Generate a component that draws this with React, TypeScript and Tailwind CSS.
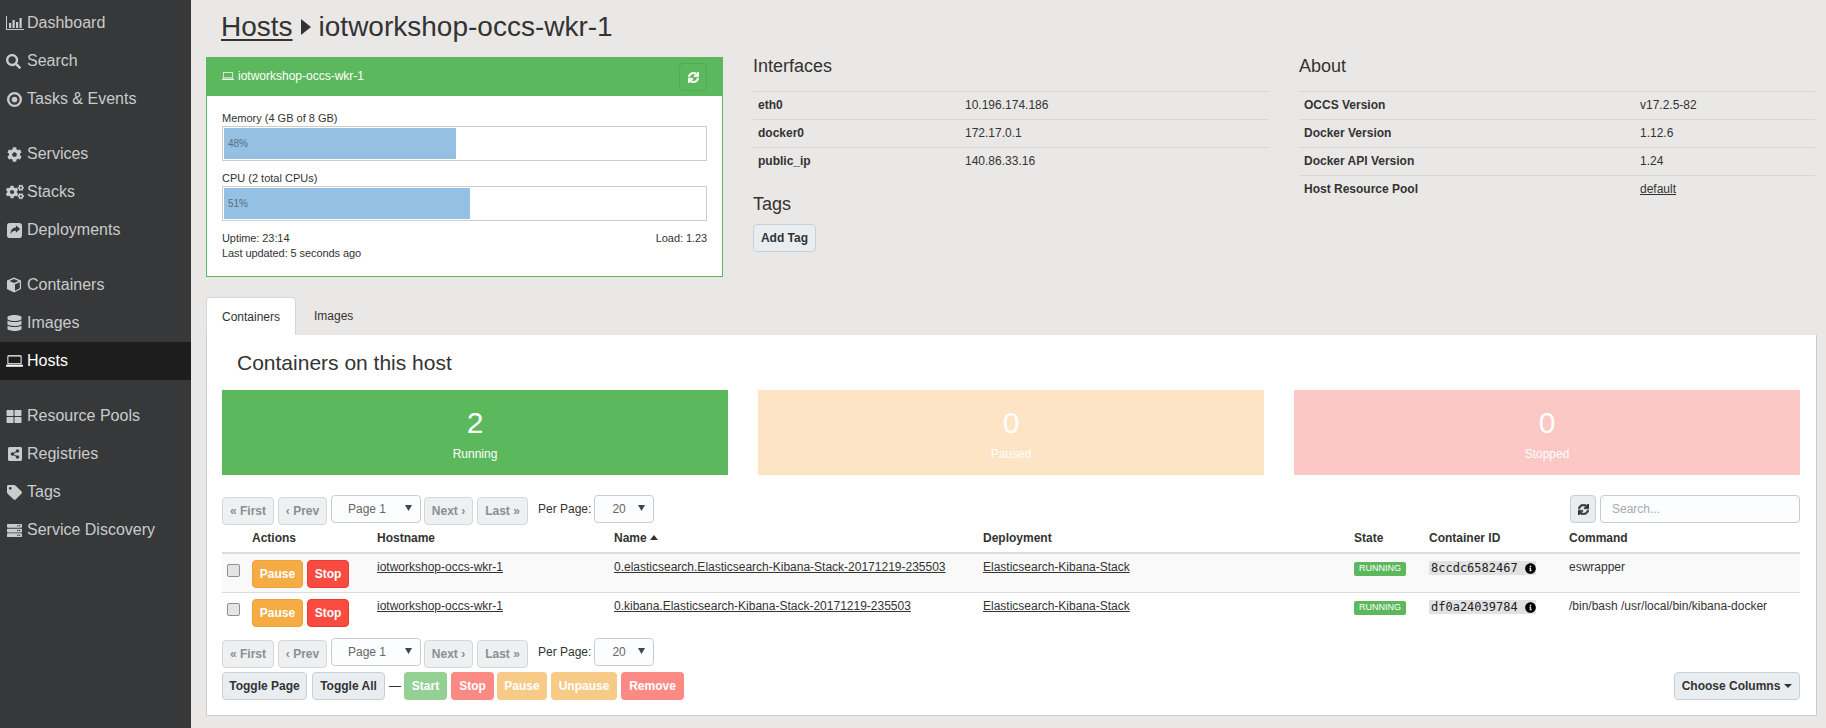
import React from 'react';
import {
  FaSearch, FaCog, FaCogs, FaDatabase,
  FaThLarge, FaShareAltSquare, FaTag, FaServer, FaSync, FaInfoCircle,
} from 'react-icons/fa';

const ChartIcon = () => (
  <svg viewBox="0 0 18 16" className="w-[18px] h-[16px]" fill="currentColor">
    <path d="M0 1h1v13h17v1H0z" />
    <path d="M3 8h2.200v5H3zM6.500 5h2.200v8H6.500zM10 7h2.200v6H10zM13.500 3h2.200v10h-2.200z" />
  </svg>
);

const DotCircleIcon = () => (
  <svg viewBox="0 0 16 16" className="w-[15px] h-[15px] ml-px" fill="currentColor">
    <path fillRule="evenodd" d="M8 0a8 8 0 1 1 0 16A8 8 0 0 1 8 0zm0 2.500a5.500 5.500 0 1 0 0 11 5.500 5.500 0 0 0 0-11z" />
    <circle cx="8" cy="8" r="3" />
  </svg>
);

const ShareSquareIcon = () => (
  <svg viewBox="0 0 16 16" className="w-[15px] h-[15px] ml-px" fill="currentColor">
    <rect width="16" height="16" rx="3" />
    <path fill="#37383a" d="M9.500 2.500L14 6.500l-4.500 4V8.200C6.500 8.200 5 9 4 12c-.5-4 1.500-7 5.500-7.200z" />
  </svg>
);

const CubeIcon = () => (
  <svg viewBox="0 0 16 16" className="w-[16px] h-[16px]" fill="currentColor">
    <path d="M8 .5l7 3v8.500l-7 3.500-7-3.500V3.500z" />
    <path fill="#37383a" d="M8 2l4.500 2L8 6 3.500 4zM9 7.200l4.800-2v6.100L9 13.800z" />
  </svg>
);

const LaptopIcon = ({ className = 'w-[17px] h-[14px]' }: { className?: string }) => (
  <svg viewBox="0 0 18 14" className={className} fill="currentColor">
    <path d="M2.500 1h13a1 1 0 0 1 1 1v8.500h-15V2a1 1 0 0 1 1-1zm0 1.200v7.100h13V2.200z" />
    <path d="M0 11h18v1a1 1 0 0 1-1 1H1a1 1 0 0 1-1-1z" />
  </svg>
);

const NavItem = ({ icon, label, active }: { icon: React.ReactNode; label: string; active?: boolean }) => (
  <div className={`h-[38px] flex items-center pl-[6px] text-[16px] ${active ? 'bg-[#1c1d1c] text-white' : 'text-[#c9cccc]'}`}>
    <span className="w-[21px] flex justify-start items-center shrink-0">{icon}</span>
    <span>{label}</span>
  </div>
);

const Sidebar = () => (
  <aside className="w-[191px] shrink-0 bg-[#37383a] pt-[4px]">
    <NavItem icon={<ChartIcon />} label="Dashboard" />
    <NavItem icon={<FaSearch className="w-[15px] h-[15px]" />} label="Search" />
    <NavItem icon={<DotCircleIcon />} label="Tasks & Events" />
    <div className="h-[17px]" />
    <NavItem icon={<FaCog className="w-[15px] h-[15px] ml-px" />} label="Services" />
    <NavItem icon={<FaCogs className="w-[18px] h-[16px]" />} label="Stacks" />
    <NavItem icon={<ShareSquareIcon />} label="Deployments" />
    <div className="h-[17px]" />
    <NavItem icon={<CubeIcon />} label="Containers" />
    <NavItem icon={<FaDatabase className="w-[15px] h-[16px] ml-px" />} label="Images" />
    <NavItem icon={<LaptopIcon />} label="Hosts" active />
    <div className="h-[17px]" />
    <NavItem icon={<FaThLarge className="w-[16px] h-[15px]" />} label="Resource Pools" />
    <NavItem icon={<FaShareAltSquare className="w-[16px] h-[16px] ml-px" />} label="Registries" />
    <NavItem icon={<FaTag className="w-[15px] h-[15px] ml-px" />} label="Tags" />
    <NavItem icon={<FaServer className="w-[17px] h-[15px]" />} label="Service Discovery" />
  </aside>
);

const Meter = ({ label, pct, width }: { label: string; pct: string; width: string }) => (
  <div>
    <div className="text-[11px] leading-[14px] text-[#333]">{label}</div>
    <div className="h-[35px] border border-[#ccc] p-px mt-[1px] bg-white">
      <div className={`h-full bg-[#93c0e3] text-[10px] leading-[31px] pl-[4px] text-[#5d6d7a] ${width}`}>{pct}</div>
    </div>
  </div>
);

const HostPanel = () => (
  <div className="w-[517px] h-[220px] border border-[#5cb85c] bg-white flex flex-col">
    <div className="h-[38px] bg-[#5cb85c] flex items-center justify-between pl-[15px] pr-[15px] text-white text-[12px] shrink-0">
      <div className="flex items-center gap-[4px] -mt-[2px]">
        <LaptopIcon className="w-[12px] h-[10px]" />
        <span>iotworkshop-occs-wkr-1</span>
      </div>
      <div className="w-[28px] h-[28px] border border-[#4cae4c] rounded-[4px] flex items-center justify-center">
        <FaSync className="w-[11px] h-[11px]" stroke="currentColor" strokeWidth={30} />
      </div>
    </div>
    <div className="px-[15px] pt-[15px] flex flex-col gap-[10px]">
      <Meter label="Memory (4 GB of 8 GB)" pct="48%" width="w-[232px]" />
      <Meter label="CPU (2 total CPUs)" pct="51%" width="w-[246px]" />
    </div>
    <div className="px-[15px] pt-[10px] text-[11px] leading-[15px] tracking-[-0.08px] text-[#333]">
      <div className="flex justify-between"><span>Uptime: 23:14</span><span>Load: 1.23</span></div>
      <div>Last updated: 5 seconds ago</div>
    </div>
  </div>
);

const InfoTable = ({ rows, labelWidth }: { rows: [string, React.ReactNode][]; labelWidth: string }) => (
  <div className="mt-[15px]">
    {rows.map(([k, v]) => (
      <div key={k} className="h-[28px] border-t border-[#d9d8d6] flex items-center pl-[5px] pb-[2px] text-[12px] text-[#333]">
        <span className={`font-bold ${labelWidth}`}>{k}</span>
        <span>{v}</span>
      </div>
    ))}
  </div>
);

const GrayBtn = ({ children, className = '' }: { children: React.ReactNode; className?: string }) => (
  <button className={`h-[28px] rounded-[4px] border border-[#c8d0d6] bg-[#e9edf0] text-[12px] font-bold text-[#333] whitespace-nowrap flex items-center justify-center ${className}`}>
    {children}
  </button>
);

const PageBtn = ({ children, w }: { children: React.ReactNode; w: string }) => (
  <button className={`h-[28px] mt-[2px] rounded-[4px] border border-[#d3d8dc] bg-[#eef0f1] text-[12px] font-bold text-[#8a8f93] whitespace-nowrap flex items-center justify-center ${w}`}>
    {children}
  </button>
);

const SelectBox = ({ text, w, pad }: { text: string; w: string; pad: string }) => (
  <div className={`h-[28px] rounded-[4px] border border-[#c8cdd2] bg-[#fbfdff] text-[12px] text-[#666] flex items-center justify-between pr-[8px] ${w} ${pad}`}>
    <span>{text}</span>
    <svg viewBox="0 0 8 8" className="w-[7px] h-[7px] -mt-[4px]" fill="#444"><path d="M0 1h8L4 8z" /></svg>
  </div>
);

const Pager = () => (
  <div className="flex items-start">
    <PageBtn w="w-[52px]">« First</PageBtn>
    <PageBtn w="w-[49px] ml-[4px]">‹ Prev</PageBtn>
    <SelectBox text="Page 1" w="w-[90px] ml-[4px]" pad="pl-[16px]" />
    <PageBtn w="w-[49px] ml-[3px]">Next ›</PageBtn>
    <PageBtn w="w-[51px] ml-[4px]">Last »</PageBtn>
    <span className="ml-[10px] mr-[3px] text-[12px] leading-[28px] text-[#333]">Per Page:</span>
    <SelectBox text="20" w="w-[60px]" pad="pl-[17px]" />
  </div>
);

const Code = ({ children }: { children: string }) => (
  <span className="inline-flex items-center h-[14px] w-[107px] bg-[#e2e2e2] pl-[2px] text-[12px] font-['DejaVu_Sans_Mono',monospace] text-[#222]">
    {children}
    <FaInfoCircle className="w-[11px] h-[11px] ml-[7px] text-black" />
  </span>
);

const Row = ({ name, id, cmd, stripe }: { name: string; id: string; cmd: string; stripe?: boolean }) => (
  <div className={`grid grid-cols-[30px_125px_237px_369px_371px_75px_140px_1fr] h-[39px] pt-[6px] text-[12px] text-[#333] ${stripe ? 'bg-[#f9f9f9] border-b border-[#ddd]' : ''}`}>
    <div className="pl-[5px] pt-[4px]">
      <input type="checkbox" className="appearance-none block w-[13px] h-[13px] rounded-[2px] border border-[#8f8f8f] bg-[#e4e4e4]" />
    </div>
    <div className="flex gap-[4px]">
      <button className="w-[51px] h-[28px] rounded-[4px] bg-[#f5ac45] text-white font-bold border border-[#eea236]">Pause</button>
      <button className="w-[42px] h-[28px] rounded-[4px] bg-[#fa4b40] text-white font-bold border border-[#ee3a30]">Stop</button>
    </div>
    <div className="underline leading-[14px]">iotworkshop-occs-wkr-1</div>
    <div className="underline leading-[14px]">{name}</div>
    <div className="underline leading-[14px]">Elasticsearch-Kibana-Stack</div>
    <div className="pt-[2px]">
      <span className="flex items-center justify-center w-[52px] h-[14px] rounded-[2px] bg-[#5cb85c] text-white text-[9px]">RUNNING</span>
    </div>
    <div className="pt-[1px] leading-[14px]"><Code>{id}</Code></div>
    <div className="leading-[14px]">{cmd}</div>
  </div>
);

const Stat = ({ n, label, bg }: { n: string; label: string; bg: string }) => (
  <div className={`h-[85px] flex flex-col items-center text-white ${bg}`}>
    <div className="text-[30px] leading-[34px] mt-[16px]">{n}</div>
    <div className="text-[12px] leading-[14px] mt-[7px]">{label}</div>
  </div>
);

const ActionBtn = ({ label, w, bg }: { label: string; w: string; bg: string }) => (
  <button className={`h-[28px] rounded-[4px] text-white text-[12px] font-bold ${w} ${bg}`}>{label}</button>
);

export default function App() {
  return (
    <div className="w-[1826px] h-[728px] flex overflow-hidden bg-[#e9e8e6] font-['Liberation_Sans',sans-serif]">
      <Sidebar />
      <main className="flex-1 pl-[15px] pr-[9px]">
        <h1 className="h-[57px] pl-[15px] pt-[10px] text-[28px] leading-[34px] text-[#333] flex items-start">
          <span className="underline decoration-2 underline-offset-[3px]">Hosts</span>
          <svg viewBox="0 0 10 16" className="w-[10px] h-[16px] mx-[8px] mt-[9px]" fill="#333"><path d="M0 0l10 8-10 8z" /></svg>
          <span>iotworkshop-occs-wkr-1</span>
        </h1>

        <div className="flex h-[240px]">
          <HostPanel />
          <div className="w-[516px] ml-[30px]">
            <h3 className="text-[18px] leading-[20px] text-[#333] mt-[-1px]">Interfaces</h3>
            <InfoTable labelWidth="w-[207px]" rows={[['eth0', '10.196.174.186'], ['docker0', '172.17.0.1'], ['public_ip', '140.86.33.16']]} />
            <h3 className="text-[18px] leading-[20px] text-[#333] mt-[19px]">Tags</h3>
            <GrayBtn className="mt-[10px] w-[63px]">Add Tag</GrayBtn>
          </div>
          <div className="w-[516px] ml-[30px]">
            <h3 className="text-[18px] leading-[20px] text-[#333] mt-[-1px]">About</h3>
            <InfoTable
              labelWidth="w-[336px]"
              rows={[
                ['OCCS Version', 'v17.2.5-82'],
                ['Docker Version', '1.12.6'],
                ['Docker API Version', '1.24'],
                ['Host Resource Pool', <span className="underline">default</span>],
              ]}
            />
          </div>
        </div>

        <div className="flex h-[38px] text-[12px] text-[#333]">
          <div className="w-[90px] bg-white border border-b-0 border-[#d5d5d5] rounded-t-[4px] flex items-center justify-center">Containers</div>
          <div className="pl-[18px] flex items-center">Images</div>
        </div>

        <section className="h-[381px] bg-white border border-[#ccc] border-t-0 pl-[15px] pr-[16px]">
          <h2 className="pl-[15px] pt-[16px] h-[55px] text-[21px] leading-[24px] text-[#333]">Containers on this host</h2>
          <div className="grid grid-cols-3 gap-[30px]">
            <Stat n="2" label="Running" bg="bg-[#5cb85c]" />
            <Stat n="0" label="Paused" bg="bg-[#fce4c5]" />
            <Stat n="0" label="Stopped" bg="bg-[#fbc8c5]" />
          </div>

          <div className="flex justify-between mt-[20px]">
            <Pager />
            <div className="flex gap-[4px]">
              <GrayBtn className="w-[26px]"><FaSync className="w-[11px] h-[11px]" stroke="currentColor" strokeWidth={30} /></GrayBtn>
              <div className="w-[200px] h-[28px] rounded-[4px] border border-[#c8cdd2] bg-[#fbfdff] pl-[11px] text-[12px] leading-[26px] text-[#aaa]">Search...</div>
            </div>
          </div>

          <div className="grid grid-cols-[30px_125px_237px_369px_371px_75px_140px_1fr] h-[29px] pb-[2px] border-b-2 border-[#ddd] items-center text-[12px] font-bold text-[#333]">
            <div />
            <div>Actions</div>
            <div>Hostname</div>
            <div className="flex items-center gap-[3px]">
              Name
              <svg viewBox="0 0 8 5" className="w-[8px] h-[5px]" fill="#333"><path d="M4 0l4 5H0z" /></svg>
            </div>
            <div>Deployment</div>
            <div>State</div>
            <div>Container ID</div>
            <div>Command</div>
          </div>
          <Row stripe name="0.elasticsearch.Elasticsearch-Kibana-Stack-20171219-235503" id="8ccdc6582467" cmd="eswrapper" />
          <Row name="0.kibana.Elasticsearch-Kibana-Stack-20171219-235503" id="df0a24039784" cmd="/bin/bash /usr/local/bin/kibana-docker" />

          <div className="mt-[6px]"><Pager /></div>

          <div className="flex justify-between mt-[4px]">
            <div className="flex items-center">
              <GrayBtn className="w-[85px]">Toggle Page</GrayBtn>
              <GrayBtn className="w-[73px] ml-[5px]">Toggle All</GrayBtn>
              <span className="ml-[4px] mr-[3px] text-[12px] text-[#333]">—</span>
              <ActionBtn label="Start" w="w-[43px]" bg="bg-[#94d094]" />
              <ActionBtn label="Stop" w="w-[43px] ml-[4px]" bg="bg-[#fb8a84]" />
              <ActionBtn label="Pause" w="w-[50px] ml-[3px]" bg="bg-[#f7ca88]" />
              <ActionBtn label="Unpause" w="w-[66px] ml-[4px]" bg="bg-[#f7ca88]" />
              <ActionBtn label="Remove" w="w-[63px] ml-[4px]" bg="bg-[#fb8a84]" />
            </div>
            <GrayBtn className="w-[126px]">
              Choose Columns
              <svg viewBox="0 0 8 4" className="w-[8px] h-[4px] ml-[4px]" fill="#333"><path d="M0 0h8L4 4z" /></svg>
            </GrayBtn>
          </div>
        </section>
      </main>
    </div>
  );
}
